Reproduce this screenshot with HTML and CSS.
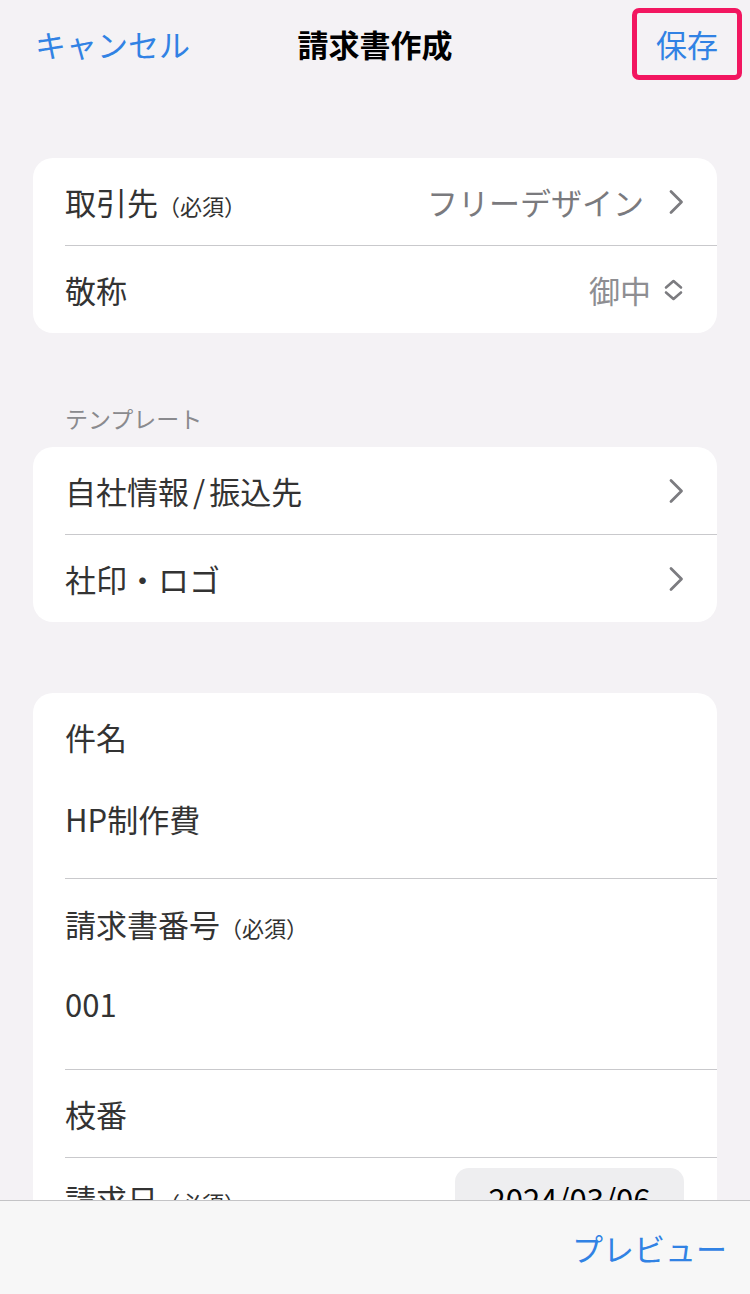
FILE: index.html
```html
<!DOCTYPE html>
<html lang="ja">
<head>
  <meta charset="UTF-8">
  <meta name="viewport" content="width=device-width, initial-scale=1.0">
  <title>請求書作成</title>
  <link rel="stylesheet" href="styles.css">
</head>
<body>
  <!-- Navigation Bar -->
  <header class="nav">
    <span class="nav-btn nav-cancel">キャンセル</span>
    <h1 class="nav-title">請求書作成</h1>
    <span class="nav-btn nav-save">保存</span>
  </header>

  <main class="content">
    <!-- Client -->
    <section class="card card-first">
      <div class="row">
        <div class="row-inner">
          <span class="row-label">取引先<small>（必須）</small></span>
          <span class="row-value dark">フリーデザイン</span>
          <svg class="chevron" width="16" height="26" viewBox="0 0 16 26"><path d="M3 2.5 L13.5 13 L3 23.5" fill="none" stroke="#7c7c80" stroke-width="2.8" stroke-linecap="round" stroke-linejoin="round"/></svg>
        </div>
      </div>
      <div class="row">
        <div class="row-inner">
          <span class="row-label">敬称</span>
          <span class="row-value">御中</span>
          <svg class="updown" width="21" height="24" viewBox="0 0 21 24"><path d="M3 9.5 L10.5 3 L18 9.5 M3 14.5 L10.5 21 L18 14.5" fill="none" stroke="#7c7c80" stroke-width="2.6" stroke-linecap="round" stroke-linejoin="round"/></svg>
        </div>
      </div>
    </section>

    <!-- Template -->
    <p class="section-label">テンプレート</p>
    <section class="card">
      <div class="row">
        <div class="row-inner">
          <span class="row-label">自社情報<span class="slash">/</span>振込先</span>
          <svg class="chevron" width="16" height="26" viewBox="0 0 16 26"><path d="M3 2.5 L13.5 13 L3 23.5" fill="none" stroke="#7c7c80" stroke-width="2.8" stroke-linecap="round" stroke-linejoin="round"/></svg>
        </div>
      </div>
      <div class="row">
        <div class="row-inner">
          <span class="row-label">社印・ロゴ</span>
          <svg class="chevron" width="16" height="26" viewBox="0 0 16 26"><path d="M3 2.5 L13.5 13 L3 23.5" fill="none" stroke="#7c7c80" stroke-width="2.8" stroke-linecap="round" stroke-linejoin="round"/></svg>
        </div>
      </div>
    </section>

    <!-- Invoice details -->
    <section class="card card-details">
      <div class="row">
        <div class="field">
          <div class="field-label">件名</div>
          <div class="field-value">HP制作費</div>
        </div>
      </div>
      <div class="row">
        <div class="field field-number">
          <div class="field-label">請求書番号<small>（必須）</small></div>
          <div class="field-value">001</div>
        </div>
      </div>
      <div class="row">
        <div class="row-inner">
          <span class="row-label">枝番</span>
        </div>
      </div>
      <div class="row">
        <div class="row-inner row-date">
          <span class="row-label">請求日<small>（必須）</small></span>
          <span class="date-pill">2024/03/06</span>
        </div>
      </div>
    </section>
  </main>

  <!-- Toolbar -->
  <footer class="toolbar">
    <span class="nav-btn">プレビュー</span>
  </footer>
</body>
</html>
```

FILE: styles.css
```css
/* General Styles */
body {
  font-family: "Noto Sans CJK JP", "Noto Sans", sans-serif;
  margin: 0;
  padding: 0;
  background: #f4f2f5;
  color: #333;
  height: 100vh;
  display: flex;
  flex-direction: column;
  overflow: hidden;
}

/* Navigation Bar */
.nav {
  height: 88px;
  flex-shrink: 0;
  display: grid;
  grid-template-columns: 1fr auto 1fr;
  align-items: center;
  padding: 0 8px;
}

.nav-btn {
  color: #3182e4;
  font-size: 31px;
  line-height: 44px;
}

.nav-cancel {
  margin-left: 27px;
}

.nav-title {
  margin: 0;
  font-size: 31px;
  font-weight: 700;
  color: #000;
  line-height: 44px;
}

.nav-save {
  justify-self: end;
  height: 62px;
  display: flex;
  align-items: center;
  padding: 0 19px;
  border: 5px solid #f21660;
  border-radius: 7px;
}

/* Content */
.content {
  flex: 1;
  overflow: hidden;
  padding: 0 33px;
}

.card {
  background: #fff;
  border-radius: 20px;
  overflow: hidden;
}

.card-first {
  margin-top: 70px;
}

.card-details {
  margin-top: 71px;
}

.section-label {
  margin: 68px 0 12px;
  padding-left: 32px;
  font-size: 23px;
  line-height: 34px;
  color: #8a8a8e;
}

.row {
  padding-left: 32px;
}

.row-inner {
  height: 87px;
  display: flex;
  align-items: center;
  padding-right: 33px;
  border-bottom: 1px solid #c9c9cc;
}

.row:last-child .row-inner,
.row:last-child .field {
  border-bottom: none;
}

.row-label {
  flex: 1;
  font-size: 31px;
}

.slash {
  padding: 0 4px;
}

small {
  font-size: 22px;
  line-height: 1;
}

.row-value {
  font-size: 31px;
  color: #8e8e92;
  margin-right: 12px;
}

.row-value.dark {
  color: #7a7a7e;
  margin-right: 24px;
}

.chevron,
.updown {
  flex-shrink: 0;
}

/* Stacked fields */
.field {
  padding: 22px 33px 37px 0;
  border-bottom: 1px solid #c9c9cc;
}

.field-label,
.field-value {
  font-size: 31px;
  line-height: 44px;
}

.field-value {
  margin-top: 38px;
}

.field-number {
  padding-top: 23px;
  padding-bottom: 43px;
}

.field-number .field-value {
  margin-top: 36px;
}

.row-date {
  height: auto;
  align-items: flex-start;
  padding-top: 10px;
}

.row-date .row-label {
  padding-top: 8px;
}

.date-pill {
  width: 229px;
  height: 60px;
  border-radius: 14px;
  background: #eeeef0;
  color: #000;
  font-size: 31px;
  display: flex;
  align-items: center;
  justify-content: center;
}

/* Toolbar */
.toolbar {
  height: 93px;
  flex-shrink: 0;
  border-top: 1px solid #c4c4c6;
  background: #f7f7f7;
  display: flex;
  align-items: center;
  justify-content: flex-end;
  padding-right: 23px;
}
```
